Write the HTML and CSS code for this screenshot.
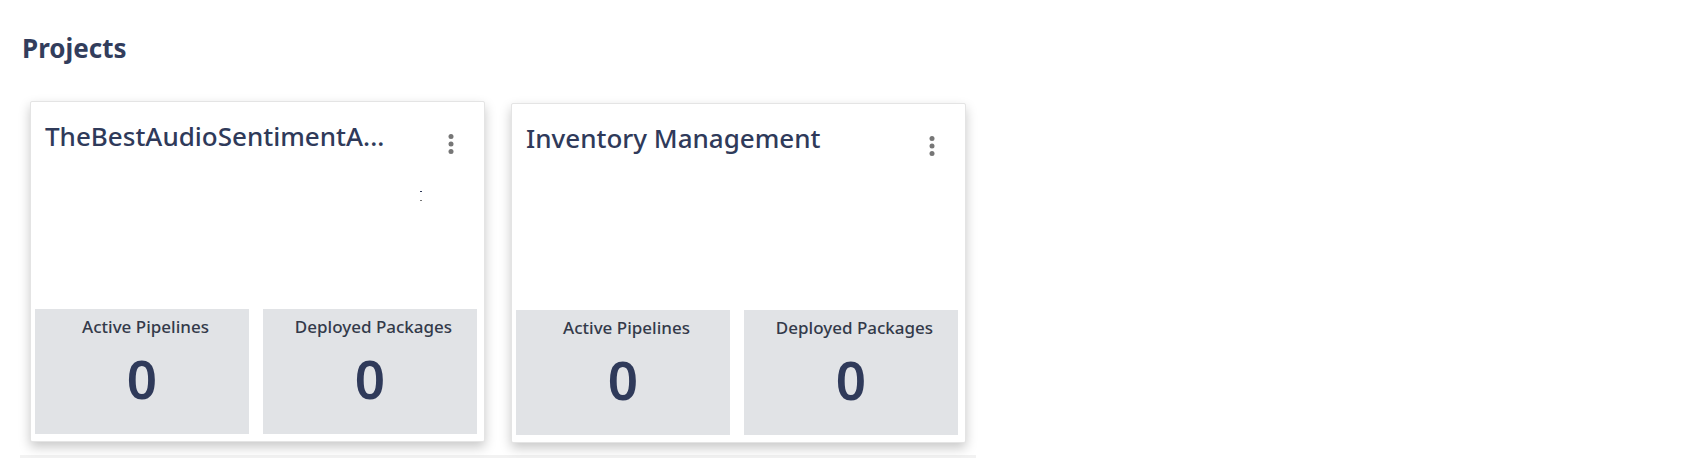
FILE: index.html
```html
<!DOCTYPE html>
<html lang="en">
<head>
    <meta charset="UTF-8">
    <meta name="viewport" content="width=device-width, initial-scale=1.0">
    <title>Projects</title>
    <link rel="stylesheet" href="styles.css">
</head>
<body>
    <h2 class="page-title">Projects</h2>

    <div class="project-list">
        <div class="project-card">
            <div class="card-header">
                <span class="card-title" title="TheBestAudioSentimentAnalysis">TheBestAudioSentimentA...</span>
                <button class="card-menu" title="More">
                    <svg width="24" height="24" viewBox="0 0 24 24"><circle cx="12" cy="4.5" r="2.5"/><circle cx="12" cy="12" r="2.5"/><circle cx="12" cy="19.5" r="2.5"/></svg>
                </button>
            </div>
            <span class="card-mark"></span>
            <div class="card-stats">
                <div class="stat">
                    <div class="stat-label">Active Pipelines</div>
                    <div class="stat-value">0</div>
                </div>
                <div class="stat">
                    <div class="stat-label">Deployed Packages</div>
                    <div class="stat-value">0</div>
                </div>
            </div>
        </div>

        <div class="project-card">
            <div class="card-header">
                <span class="card-title">Inventory Management</span>
                <button class="card-menu" title="More">
                    <svg width="24" height="24" viewBox="0 0 24 24"><circle cx="12" cy="4.5" r="2.5"/><circle cx="12" cy="12" r="2.5"/><circle cx="12" cy="19.5" r="2.5"/></svg>
                </button>
            </div>
            <div class="card-stats">
                <div class="stat">
                    <div class="stat-label">Active Pipelines</div>
                    <div class="stat-value">0</div>
                </div>
                <div class="stat">
                    <div class="stat-label">Deployed Packages</div>
                    <div class="stat-value">0</div>
                </div>
            </div>
        </div>
    </div>
</body>
</html>
```

FILE: styles.css
```css
body {
    margin: 0;
    font-family: "Noto Sans", "Open Sans", sans-serif;
    background-color: #ffffff;
    color: #2f3a5a;
}
.page-title {
    margin: 0;
    padding: 30px 0 0 22px;
    font-size: 26px;
    line-height: 36px;
    font-weight: 700;
    color: #323d5c;
}
.project-list {
    display: flex;
    align-items: flex-start;
    gap: 26px;
    width: fit-content;
    margin: 35px 0 0 20px;
    padding: 0 10px 12px 10px;
    border-bottom: 3px solid #f2f2f2;
}
.project-card {
    position: relative;
    display: flex;
    flex-direction: column;
    justify-content: space-between;
    width: 455px;
    height: 341px;
    box-sizing: border-box;
    background: white;
    border: 1px solid #e4e4e4;
    border-radius: 2px;
    box-shadow: 0 5px 12px rgba(0,0,0,0.22);
}
.project-card:nth-child(2) {
    margin-top: 2px;
    height: 340px;
}
.card-header {
    display: flex;
    align-items: flex-start;
    padding: 16px 21px 0 14px;
}
.card-title {
    white-space: nowrap;
    font-size: 26px;
    line-height: 36px;
    font-weight: 500;
    color: #2f3a5a;
}
.card-menu {
    margin: 14px 0 0 auto;
    padding: 0;
    border: none;
    background: none;
    cursor: pointer;
    line-height: 0;
}
.card-menu svg {
    fill: #767676;
}
.card-mark {
    position: absolute;
    left: 389px;
    top: 89px;
    width: 2px;
    height: 11px;
    background: linear-gradient(#2f3a5a 0, #2f3a5a 1px, transparent 1px, transparent 9px, #777 9px, #777 10px, transparent 10px);
}
.card-stats {
    display: flex;
    gap: 14px;
    padding: 0 7px 7px 4px;
}
.stat {
    width: 214px;
    height: 125px;
    box-sizing: border-box;
    padding-top: 6px;
    background-color: #e1e3e6;
    text-align: center;
}
.stat-label {
    padding-left: 7px;
    font-size: 17px;
    line-height: 24px;
    font-weight: 500;
    color: #333a4a;
}
.stat-value {
    margin-top: 13px;
    font-size: 53px;
    line-height: 53px;
    font-weight: 600;
    color: #2f3a5a;
}
```
